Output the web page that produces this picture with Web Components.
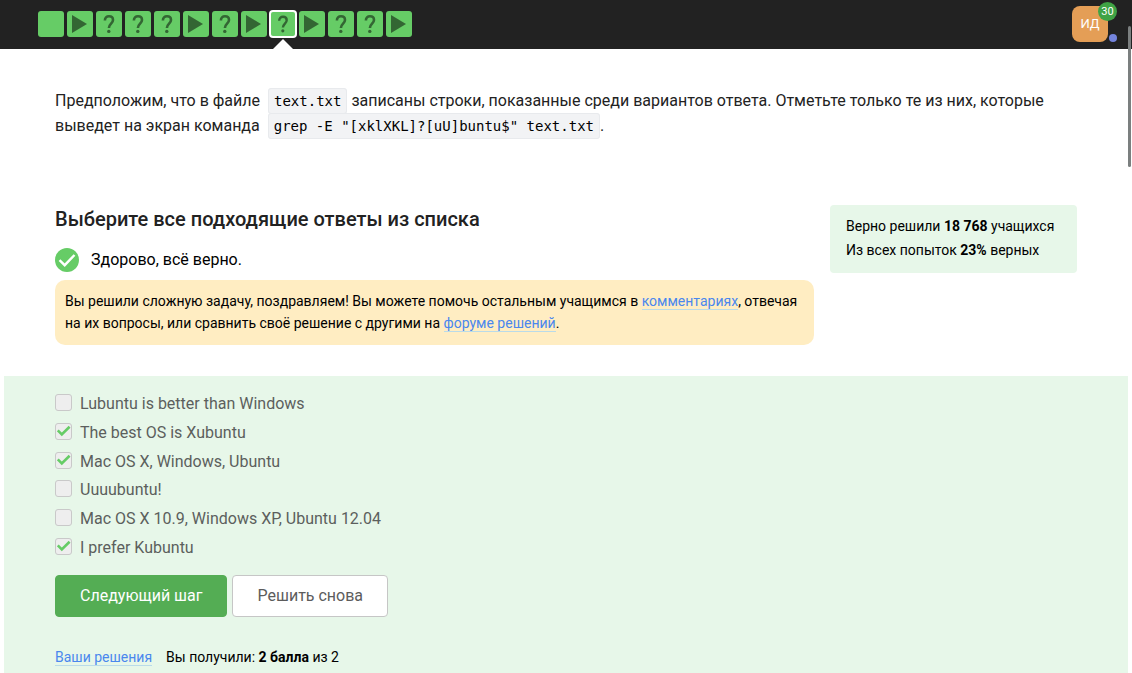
<!DOCTYPE html>
<html lang="ru">
<head>
<meta charset="utf-8">
<meta name="viewport" content="width=device-width, initial-scale=1">
<title>Шаг урока</title>
<style>
  html { scrollbar-width: none; }
  body { margin: 0; background: #fff; color: #000; font-family: Roboto, "Noto Sans", sans-serif; font-size: 16px; }
</style>
</head>
<body>
<lesson-page></lesson-page>
<script>
function define(name, html, setup) {
  const template = document.createElement('template');
  template.innerHTML = html;
  customElements.define(name, class extends HTMLElement {
    constructor() {
      super();
      this.attachShadow({ mode: 'open' }).append(template.content.cloneNode(true));
    }
    connectedCallback() {
      if (setup) setup(this, this.shadowRoot);
    }
  });
}

const linkStyle = `
  a { color: #4a87ee; text-decoration: none; border-bottom: 1px solid #b9dbe9; }
`;

define('step-pin', `
  <style>
    :host { display: block; position: relative; }
    a { display: block; width: 26px; height: 26px; border-radius: 3px; background: #66cc66; }
    svg { display: block; width: 26px; height: 26px; fill: #336633; stroke: none; }
    .mark { fill: none; stroke: #336633; stroke-width: 2.6; }
    svg > * { display: none; }
    :host([kind="video"]) .video, :host([kind="quiz"]) .quiz { display: inline; }
    :host([current]) a { border-radius: 2px; box-shadow: 0 0 0 2px #fff; margin: 1px; width: 24px; height: 24px; }
    :host([current]) svg { width: 24px; height: 24px; }
    :host([current])::after {
      content: ""; position: absolute; left: 3px; top: 28px;
      border: 10px solid transparent; border-top: 0; border-bottom-color: #fff;
    }
  </style>
  <a href="#">
    <svg viewBox="0 0 26 26" aria-hidden="true">
      <path class="video" d="M5 4 20 13 5 22z"/>
      <g class="quiz">
        <path class="mark" d="M8.9 9.5C8.9 6.7 10.6 5.2 13 5.2s4 1.3 4 3.7c0 3.5-4.1 3.9-4.1 8"/>
        <circle cx="12.8" cy="20.4" r="1.7"/>
      </g>
    </svg>
  </a>
`, (host, root) => {
  const a = root.querySelector('a');
  a.setAttribute('aria-label', { video: 'Видео', quiz: 'Задача' }[host.getAttribute('kind')] || 'Текст');
  if (host.hasAttribute('current')) a.setAttribute('aria-current', 'step');
});

define('user-badge', `
  <style>
    :host { display: block; position: relative; }
    button {
      display: block; width: 36px; height: 36px; border: 0; border-radius: 8px; padding: 0;
      background: #e49e56; color: #fff; font: 13px/36px Roboto, sans-serif;
    }
    .count {
      position: absolute; right: -9px; top: -4px; width: 19px; height: 19px; border-radius: 10px;
      background: #3fa345; color: #fff; font-size: 11px; line-height: 19px; text-align: center;
    }
    .dot {
      position: absolute; right: -9px; bottom: 0; width: 8px; height: 8px; border-radius: 4px; background: #7484dc;
    }
  </style>
  <button type="button"><slot></slot></button>
  <span class="count"><slot name="count"></slot></span>
  <span class="dot"></span>
`);

define('lesson-header', `
  <style>
    :host { display: block; background: #222; }
    header { display: flex; align-items: center; justify-content: space-between; height: 49px; padding: 0 24px 1px 38px; box-sizing: border-box; }
    nav { display: flex; gap: 3px; }
  </style>
  <header>
    <nav aria-label="Шаги урока">
      <step-pin></step-pin><step-pin kind="video"></step-pin><step-pin kind="quiz"></step-pin>
      <step-pin kind="quiz"></step-pin><step-pin kind="quiz"></step-pin><step-pin kind="video"></step-pin>
      <step-pin kind="quiz"></step-pin><step-pin kind="video"></step-pin><step-pin kind="quiz" current></step-pin>
      <step-pin kind="video"></step-pin><step-pin kind="quiz"></step-pin><step-pin kind="quiz"></step-pin>
      <step-pin kind="video"></step-pin>
    </nav>
    <user-badge>ИД<span slot="count">30</span></user-badge>
  </header>
`);

define('code-chip', `
  <style>
    :host { display: inline; }
    code {
      margin-left: 4px; padding: 4px 5px; border: 1px solid #e8eaed; border-radius: 3px;
      background: #f2f3f5; color: #000; font: 14px/16px "DejaVu Sans Mono", monospace; white-space: nowrap;
    }
  </style><code><slot></slot></code>`);

define('task-text', `
  <style>
    :host { display: block; padding: 39px 55px 0; color: #222; line-height: 25px; }
    p { margin: 0; }
  </style>
  <p><slot></slot></p>
`);

define('solve-stats', `
  <style>
    :host { display: block; box-sizing: border-box; padding: 9px 16px 11px; border-radius: 4px; background: #e7f7e9; font-size: 14px; line-height: 24px; white-space: nowrap; }
    p { margin: 0; }
  </style>
  <p>Верно решили <b>18 768</b> учащихся</p>
  <p>Из всех попыток <b>23%</b> верных</p>
`);

define('result-message', `
  <style>
    :host { display: flex; align-items: center; gap: 12px; line-height: 24px; }
    svg { width: 24px; height: 24px; flex: none; }
  </style>
  <svg viewBox="0 0 24 24" aria-hidden="true">
    <circle cx="12" cy="12" r="12" fill="#66cc66"/>
    <path d="M4.5 12.2 9.7 17.2 19.5 7" fill="none" stroke="#fff" stroke-width="2.4"/>
  </svg>
  <span><slot></slot></span>
`);

define('hint-card', `
  <style>
    :host { display: block; padding: 10px 10px 11px; border-radius: 10px; background: #ffedc2; font-size: 14px; line-height: 22px; }
    p { margin: 0; }
    ${linkStyle}
  </style>
  <p>Вы решили сложную задачу, поздравляем! Вы можете помочь остальным учащимся в <a href="#comments">комментариях</a>, отвечая на их вопросы, или сравнить своё решение с другими на <a href="#forum">форуме решений</a>.</p>
`);

define('quiz-head', `
  <style>
    :host { display: grid; grid-template-columns: minmax(0, 1fr) 247px; column-gap: 16px; align-items: start; padding: 67px 55px 31px; }
    h2 { margin: 0 0 15px; color: #222; font-size: 20px; font-weight: 500; line-height: 28px; }
    hint-card { margin-top: 8px; }
  </style>
  <div>
    <h2>Выберите все подходящие ответы из списка</h2>
    <result-message>Здорово, всё верно.</result-message>
    <hint-card></hint-card>
  </div>
  <solve-stats></solve-stats>
`);

define('answer-option', `
  <style>
    :host { display: flex; align-items: center; }
    label { display: flex; align-items: center; gap: 8px; line-height: 24px; }
    .box { display: grid; margin-bottom: 3px; }
    .box > * { grid-area: 1 / 1; }
    input { appearance: none; box-sizing: border-box; width: 17px; height: 17px; margin: 0; border: 1px solid #c9c9c9; border-radius: 3px; background: #eee; }
    svg { width: 17px; height: 17px; visibility: hidden; pointer-events: none; }
    input:checked + svg { visibility: visible; }
  </style>
  <label>
    <span class="box">
      <input type="checkbox" disabled>
      <svg viewBox="0 0 17 17" aria-hidden="true"><path d="M2.8 7.4 6.8 11.4 14.6 3.8" fill="none" stroke="#66cc66" stroke-width="2.6"/></svg>
    </span>
    <span><slot></slot></span>
  </label>
`, (host, root) => { root.querySelector('input').checked = host.hasAttribute('checked'); });

define('action-button', `
  <style>
    :host { display: block; }
    button {
      display: block; padding: 8px 24px; border: 1px solid #c6c6c6; border-radius: 4px;
      background: #fff; color: #5c5c5c; font: 16px/24px Roboto, sans-serif;
    }
    :host([primary]) button { border-color: #54ad54; background: #54ad54; color: #fff; }
  </style>
  <button type="button"><slot></slot></button>
`);

define('quiz-answers', `
  <style>
    :host { display: block; flex: 1; margin: 0 4px; padding: 14px 51px 4px; background: #e7f7e9; }
    .options { display: grid; grid-auto-rows: 1fr; min-height: 172px; color: #5c5f5d; }
    .actions { display: flex; gap: 5px; margin-top: 13px; }
    .score { display: flex; gap: 14px; margin: 29px 0 0; font-size: 14px; line-height: 22px; }
    ${linkStyle}
  </style>
  <div class="options" role="group" aria-label="Варианты ответа">
    <answer-option>Lubuntu is better than Windows</answer-option>
    <answer-option checked>The best OS is Xubuntu</answer-option>
    <answer-option checked>Mac OS X, Windows, Ubuntu</answer-option>
    <answer-option>Uuuubuntu!</answer-option>
    <answer-option>Mac OS X 10.9, Windows XP, Ubuntu 12.04</answer-option>
    <answer-option checked>I prefer Kubuntu</answer-option>
  </div>
  <div class="actions">
    <action-button primary>Следующий шаг</action-button>
    <action-button>Решить снова</action-button>
  </div>
  <p class="score">
    <span><a href="#solutions">Ваши решения</a></span>
    <span>Вы получили: <b>2 балла</b> из 2</span>
  </p>
`);

define('scroll-thumb', `
  <style>
    :host { position: absolute; right: 1px; top: 26px; width: 3px; height: 141px; border-radius: 2px; background: #7b7f7f; }
  </style>
`);

define('lesson-page', `
  <style>
    :host { display: flex; flex-direction: column; min-height: 100vh; position: relative; }
    main { display: flex; flex-direction: column; flex: 1; }
  </style>
  <lesson-header></lesson-header>
  <main>
    <task-text>Предположим, что в файле <code-chip>text.txt</code-chip> записаны строки, показанные среди вариантов ответа. Отметьте только те из них, которые выведет на экран команда <code-chip>grep -E "[xklXKL]?[uU]buntu$" text.txt</code-chip>.</task-text>
    <quiz-head></quiz-head>
    <quiz-answers></quiz-answers>
  </main>
  <scroll-thumb></scroll-thumb>
`);
</script>
</body>
</html>
